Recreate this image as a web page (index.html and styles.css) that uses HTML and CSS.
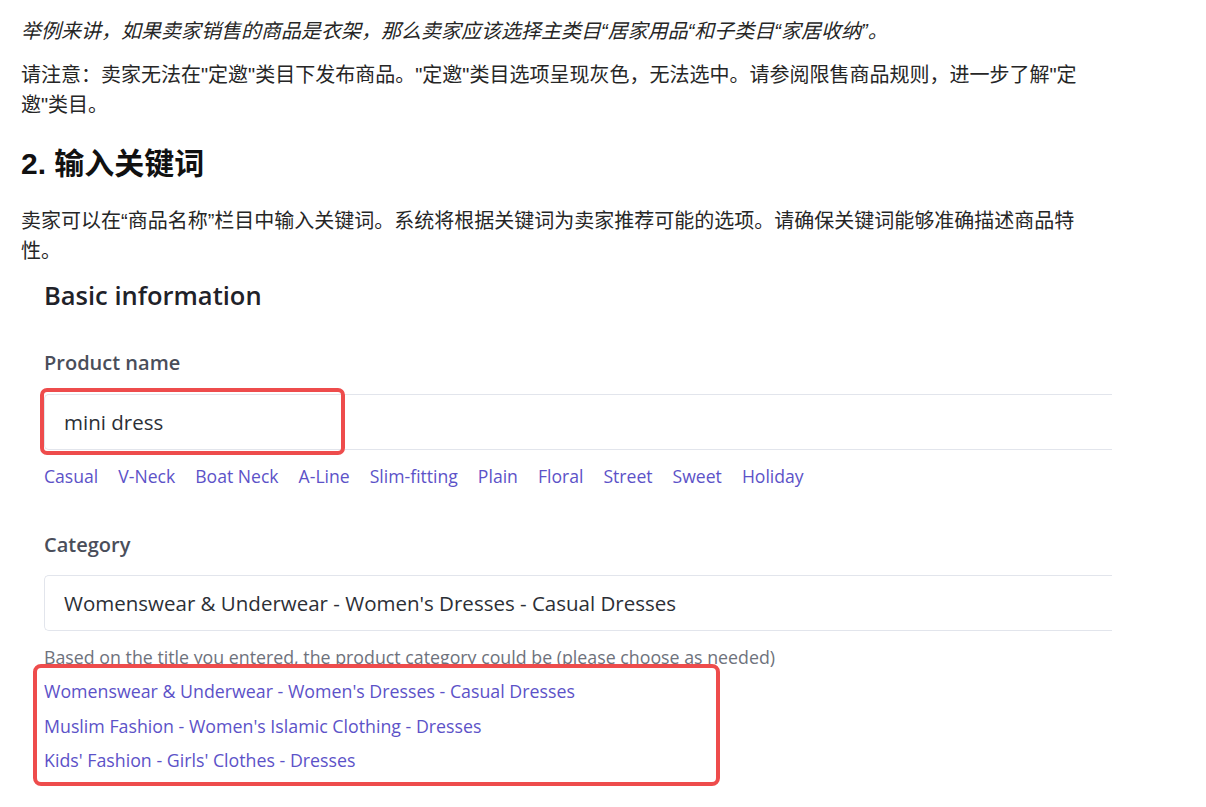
FILE: index.html
```html
<!DOCTYPE html>
<html lang="zh-CN">

<head>
  <meta charset="UTF-8">
  <meta name="viewport" content="width=device-width, initial-scale=1.0">
  <title>输入关键词</title>
  <link rel="stylesheet" href="styles.css">
</head>

<body>

  <div id="article">
    <p class="example">举例来讲，如果卖家销售的商品是衣架，那么卖家应该选择主类目“居家用品“和子类目“家居收纳”。</p>
    <p>请注意：卖家无法在"定邀"类目下发布商品。"定邀"类目选项呈现灰色，无法选中。请参阅限售商品规则，进一步了解"定邀"类目。</p>

    <h2>2. 输入关键词</h2>
    <p>卖家可以在“商品名称”栏目中输入关键词。系统将根据关键词为卖家推荐可能的选项。请确保关键词能够准确描述商品特性。</p>

    <!-- screenshot of the listing form -->
    <div id="shot">
      <div class="form-title">Basic information</div>

      <div class="field-label">Product name</div>
      <div class="input-wrap">
        <div class="input">mini dress</div>
        <span class="mark mark-name"></span>
      </div>
      <div class="tags">
        <span>Casual</span>
        <span>V-Neck</span>
        <span>Boat Neck</span>
        <span>A-Line</span>
        <span>Slim-fitting</span>
        <span>Plain</span>
        <span>Floral</span>
        <span>Street</span>
        <span>Sweet</span>
        <span>Holiday</span>
      </div>

      <div class="field-label category-label">Category</div>
      <div class="input">Womenswear &amp; Underwear - Women's Dresses - Casual Dresses</div>
      <div class="hint">Based on the title you entered, the product category could be (please choose as needed)</div>
      <div class="suggest">
        <a>Womenswear &amp; Underwear - Women's Dresses - Casual Dresses</a>
        <a>Muslim Fashion - Women's Islamic Clothing - Dresses</a>
        <a>Kids' Fashion - Girls' Clothes - Dresses</a>
      </div>
    </div>
  </div>

</body>

</html>
```

FILE: styles.css
```css
:root {
  --text-colour: rgb(38, 38, 38);
  --heading-colour: rgb(17, 17, 17);
  --form-text: rgb(44, 47, 54);
  --form-label: rgb(74, 78, 90);
  --form-hint: rgb(110, 114, 124);
  --form-border: rgb(226, 229, 236);
  --link-colour: rgb(92, 82, 200);
  --mark-colour: rgb(238, 76, 76);
  --cjk-font: "Liberation Sans", "Noto Sans CJK SC", sans-serif;
  --form-font: "Open Sans", "Liberation Sans", sans-serif;
}

html,
body {
  margin: 0px;
  padding: 0px;
  background-color: #fff;
  color: var(--text-colour);
  font-family: var(--cjk-font);
}

#article {
  width: 1077px;
  padding: 16px 0 0 21px;
}

#article p {
  margin: 0 0 14px 0;
  font-size: 20px;
  line-height: 30px;
}

#article p.example {
  font-style: italic;
}

#article h2 {
  margin: 24px 0 22px 0;
  font-size: 30px;
  line-height: 40px;
  font-weight: 700;
  color: var(--heading-colour);
}

#shot {
  width: 1068px;
  padding-left: 23px;
  margin-top: -1px;
  font-family: var(--form-font);
  color: var(--form-text);
}

.form-title {
  font-size: 25.5px;
  line-height: 32px;
  font-weight: 600;
  color: rgb(31, 34, 41);
}

.field-label {
  margin-top: 39px;
  font-size: 20px;
  line-height: 26px;
  font-weight: 600;
  color: var(--form-label);
}

.category-label {
  margin-top: 44px;
}

.input-wrap {
  position: relative;
  margin-top: 18px;
}

.input {
  height: 54px;
  border: 1px solid var(--form-border);
  border-right: none;
  border-radius: 5px 0 0 5px;
  padding-left: 19px;
  display: flex;
  align-items: center;
  font-size: 20.5px;
}

.category-label + .input {
  margin-top: 17px;
}

.mark {
  position: absolute;
  border: 4px solid var(--mark-colour);
  border-radius: 7px;
  box-sizing: border-box;
}

.mark-name {
  left: -4px;
  top: -6px;
  width: 305px;
  height: 67px;
}

.tags {
  margin-top: 14px;
  display: flex;
  gap: 20px;
  font-size: 17.6px;
  line-height: 24px;
  color: var(--link-colour);
}

.hint {
  margin-top: 16px;
  font-size: 17.8px;
  line-height: 20px;
  color: var(--form-hint);
  white-space: nowrap;
}

.suggest {
  position: relative;
  width: 687px;
  box-sizing: border-box;
  margin: -3px 0 0 -11px;
  padding: 6px 0 4px 7px;
  border: 4px solid var(--mark-colour);
  border-radius: 8px;
  display: flex;
  flex-direction: column;
}

.suggest a {
  font-size: 17.8px;
  line-height: 34.5px;
  color: var(--link-colour);
}
```
